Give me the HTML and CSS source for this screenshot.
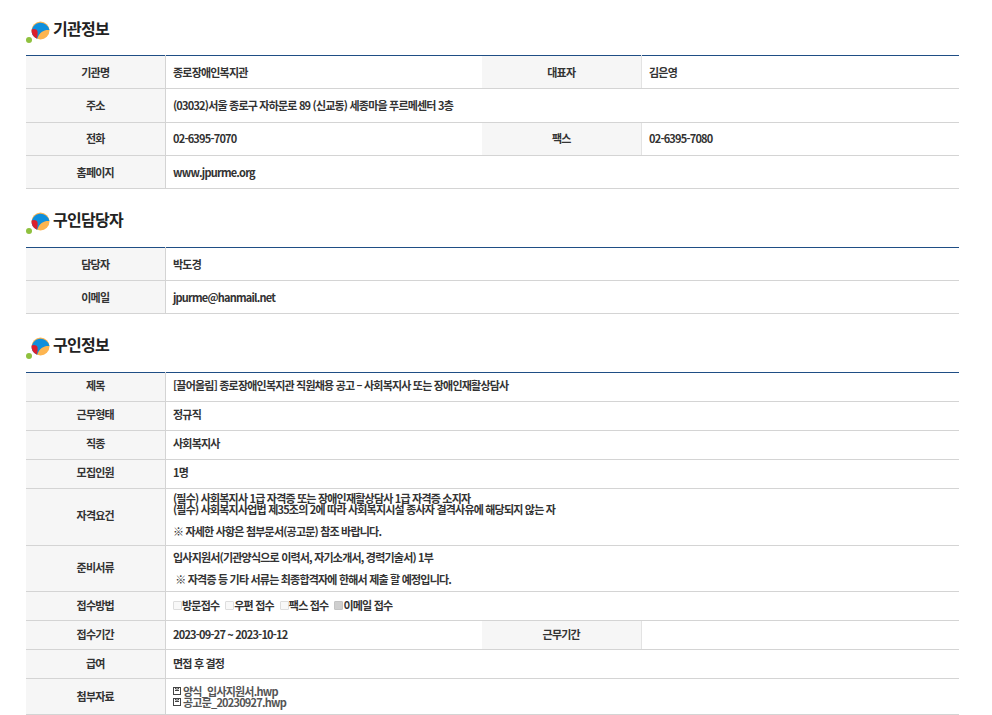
FILE: index.html
```html
<!DOCTYPE html>
<html lang="ko">
<head>
<meta charset="utf-8">
<title>구인정보</title>
<link rel="stylesheet" href="styles.css">
</head>
<body>
<main class="page">
  <section class="sec sec-a">
    <h2 class="title"><svg class="logo" viewBox="0 0 24 24" width="24" height="24"><use href="#mark"/></svg>기관정보</h2>
    <table class="info rows-33">
      <colgroup><col class="c1"><col class="c2"><col class="c3"><col></colgroup>
      <tr><th>기관명</th><td>종로장애인복지관</td><th>대표자</th><td>김은영</td></tr>
      <tr><th>주소</th><td colspan="3">(03032)서울 종로구 자하문로 89 (신교동) 세종마을 푸르메센터 3층</td></tr>
      <tr><th>전화</th><td>02-6395-7070</td><th>팩스</th><td>02-6395-7080</td></tr>
      <tr><th>홈페이지</th><td colspan="3">www.jpurme.org</td></tr>
    </table>
  </section>
  <section class="sec sec-b">
    <h2 class="title"><svg class="logo" viewBox="0 0 24 24" width="24" height="24"><use href="#mark"/></svg>구인담당자</h2>
    <table class="info rows-fixed">
      <colgroup><col class="c1"><col class="c2"><col class="c3"><col></colgroup>
      <tr><th>담당자</th><td colspan="3">박도경</td></tr>
      <tr><th>이메일</th><td colspan="3">jpurme@hanmail.net</td></tr>
    </table>
  </section>
  <section class="sec sec-b">
    <h2 class="title"><svg class="logo" viewBox="0 0 24 24" width="24" height="24"><use href="#mark"/></svg>구인정보</h2>
    <table class="info rows-29">
      <colgroup><col class="c1"><col class="c2"><col class="c3"><col></colgroup>
      <tr class="up"><th>제목</th><td colspan="3">[끌어올림] 종로장애인복지관 직원채용 공고 – 사회복지사 또는 장애인재활상담사</td></tr>
      <tr class="up"><th>근무형태</th><td colspan="3">정규직</td></tr>
      <tr class="up"><th>직종</th><td colspan="3">사회복지사</td></tr>
      <tr class="up"><th>모집인원</th><td colspan="3">1명</td></tr>
      <tr class="up r57"><th>자격요건</th><td colspan="3"><div class="tight">(필수) 사회복지사 1급 자격증 또는 장애인재활상담사 1급 자격증 소지자<br>(필수) 사회복지사업법 제35조의 2에 따라 사회복지시설 종사자 결격사유에 해당되지 않는 자</div><div class="note">※ 자세한 사항은 첨부문서(공고문) 참조 바랍니다.</div></td></tr>
      <tr class="r46"><th>준비서류</th><td colspan="3"><div>입사지원서(기관양식으로 이력서, 자기소개서, 경력기술서) 1부</div><div class="note2">&nbsp;※ 자격증 등 기타 서류는 최종합격자에 한해서 제출 할 예정입니다.</div></td></tr>
      <tr><th>접수방법</th><td colspan="3"><span class="opts"><span class="opt"><i class="box"></i>방문접수</span><span class="opt"><i class="box"></i>우편 접수</span><span class="opt"><i class="box"></i>팩스 접수</span><span class="opt"><i class="box on"></i>이메일 접수</span></span></td></tr>
      <tr><th>접수기간</th><td>2023-09-27 ~ 2023-10-12</td><th>근무기간</th><td></td></tr>
      <tr><th>급여</th><td colspan="3">면접 후 결정</td></tr>
      <tr class="r36"><th>첨부자료</th><td colspan="3"><div class="files"><div class="file"><svg class="fi" viewBox="0 0 8 8" width="8" height="8"><use href="#disk"/></svg>양식_입사지원서.hwp</div><div class="file"><svg class="fi" viewBox="0 0 8 8" width="8" height="8"><use href="#disk"/></svg>공고문_20230927.hwp</div></div></td></tr>
    </table>
  </section>
</main>
<svg class="defs" width="0" height="0" aria-hidden="true">
  <defs>
    <g id="mark">
      <circle cx="14.5" cy="10.5" r="9" fill="#fdb550"/>
      <path d="M5.7 12.5A9 9 0 0 1 23.5 10 C18 9.5 13.5 12 11.2 18.8 A9 9 0 0 1 5.7 12.5Z" fill="#0f8fdc"/>
      <path d="M5.6 9.6C8 8.3 10.8 9 11.5 11.2 C11.8 13.4 11.5 16 10.8 18.6 A9 9 0 0 1 5.6 9.6Z" fill="#dc1e2c"/>
      <circle cx="3" cy="20" r="3" fill="#8fc13e"/>
    </g>
    <g id="disk" fill="none" stroke="#444" stroke-width="1">
      <rect x=".5" y=".5" width="7" height="7"/>
      <path d="M2 3.5h4M2.5 .5v1.5h3V.5"/>
    </g>
  </defs>
</svg>
</body>
</html>
```
FILE: styles.css
```css
html, body { margin: 0; padding: 0; background: #fff; }
body {
  font-family: "Noto Sans CJK KR", "Noto Sans", sans-serif;
  color: #333;
}
.page { width: 933px; margin-left: 26px; padding-top: 14px; }
.title {
  display: flex;
  align-items: center;
  height: 28px;
  margin: 0 0 13px;
  font-size: 16px;
  font-weight: 700;
  letter-spacing: -0.7px;
  color: #222;
}
.logo { margin-right: 3px; flex: none; position: relative; top: 4px; }
.sec-b { margin-top: 16px; }
.sec-b .title { margin-bottom: 14px; }
.info {
  width: 933px;
  table-layout: fixed;
  border-collapse: collapse;
  border-top: 1px solid #1f4e85;
  font-size: 11px;
  letter-spacing: -0.8px;
  line-height: 11px;
  font-weight: 700;
}
.c1 { width: 139px; }
.c2 { width: 317px; }
.c3 { width: 159px; }
.info th, .info td { border-bottom: 1px solid #d4d4d4; padding: 0 0 0 7.5px; }
.info th {
  background: #f6f6f6;
  text-align: center;
  font-weight: 700;
  padding: 0;
  border-right: 1px solid #d4d4d4;
  color: #333;
}
.info td { text-align: left; }
.info td + th { border-left: 0; border-right: 1px solid #e3e3e3; }
.rows-33 tr { height: 33.3px; }
.rows-fixed tr { height: 33px; }
.rows-29 tr { height: 29px; }
.rows-29 th, .rows-29 td { padding-bottom: 2px; }
.rows-29 tr.up th, .rows-29 tr.up td { padding-bottom: 4px; }
.rows-29 tr.r57 { height: 57px; }
.rows-29 tr.r46 { height: 46px; }
.rows-29 tr.r46 td { padding-bottom: 0; }
.rows-29 tr.r36 { height: 36px; }
.rows-29 tr.r36 th, .rows-29 tr.r36 td { padding-bottom: 0; }
.tight { line-height: 11px; }
.note { margin-top: 9px; line-height: 14px; }
.note2 { margin-top: 9px; line-height: 14px; }
.opts { display: flex; gap: 6px; align-items: center; }
.opt { display: inline-flex; align-items: center; }
.box {
  display: inline-block;
  width: 7px;
  height: 7px;
  border: 1px solid #ddd;
  background: #f8f8f8;
  border-radius: 1px;
}
.box.on { background: #cfcfcf; border-color: #c4c4c4; }
.files { color: #555; }
.file { display: flex; align-items: center; line-height: 10.5px; }
.fi { margin-right: 2px; flex: none; }
.defs { position: absolute; }
```
